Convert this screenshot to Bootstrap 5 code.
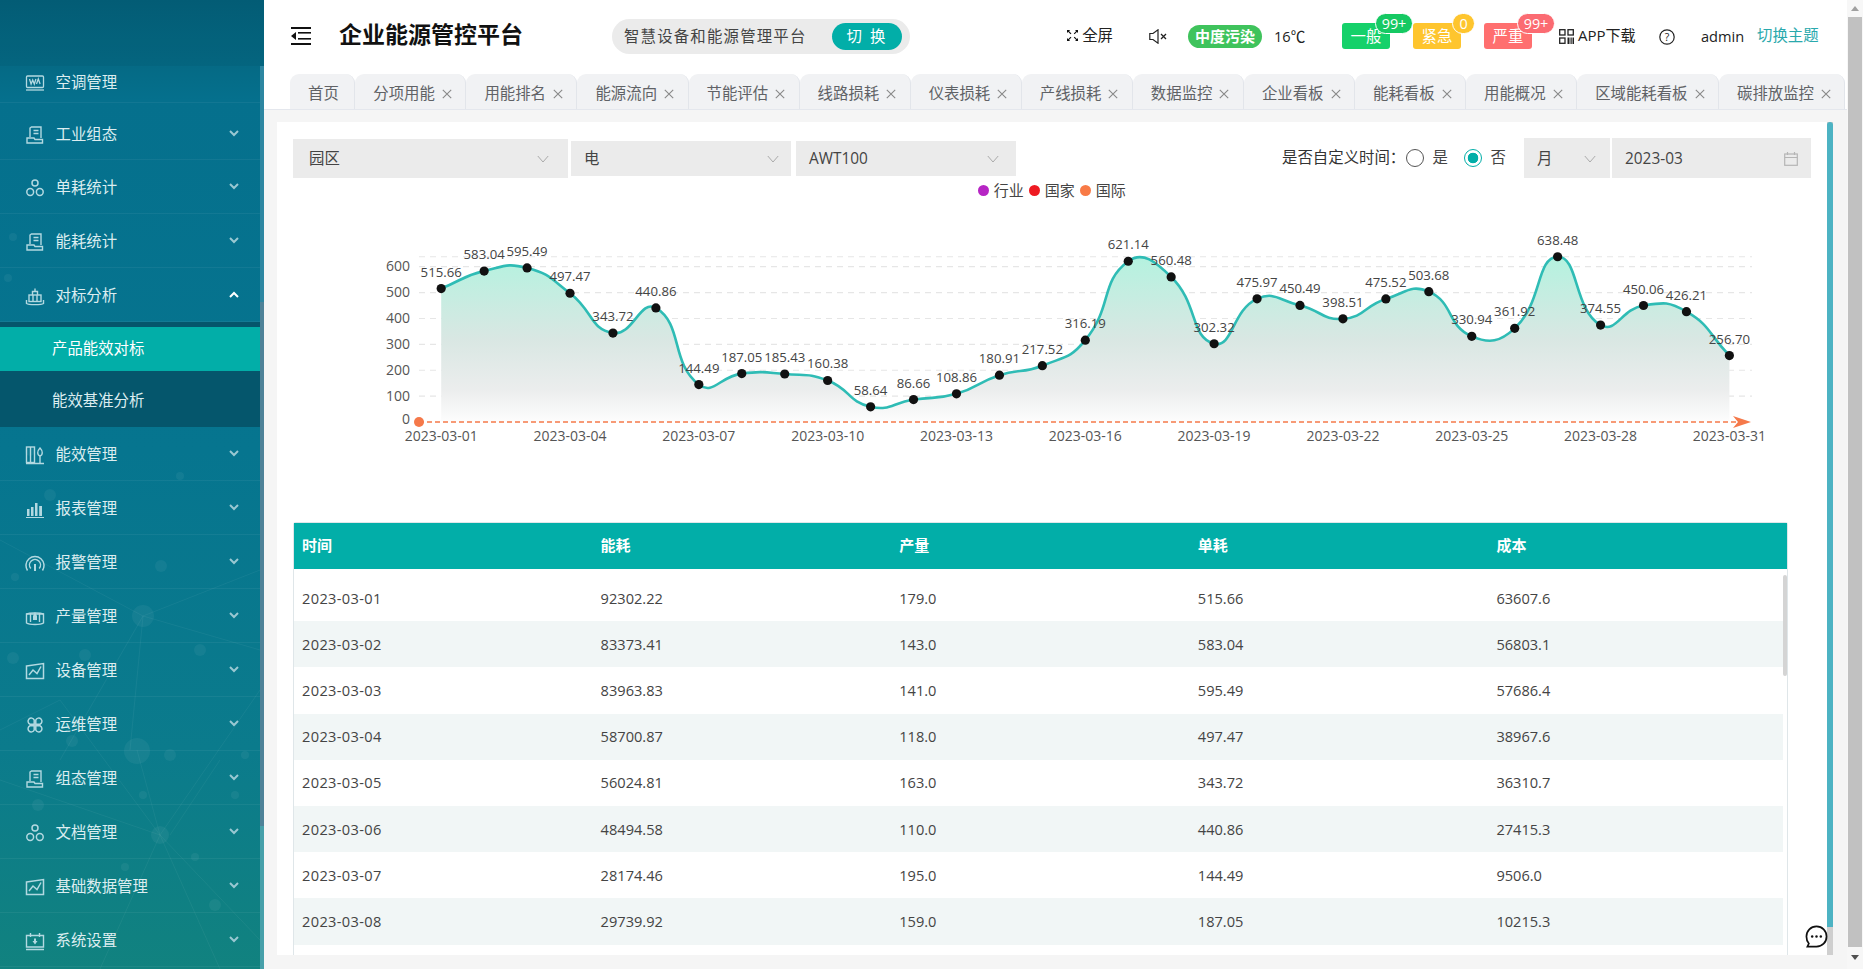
<!DOCTYPE html>
<html lang="zh-CN">
<head>
<meta charset="utf-8">
<title>企业能源管控平台</title>
<link href="https://cdn.jsdelivr.net/npm/bootstrap@5.3.0/dist/css/bootstrap.min.css" rel="stylesheet">
<style>
html,body{height:969px;overflow:hidden}
body{font-family:"Open Sans","Noto Sans CJK SC",sans-serif;font-size:15.4px;line-height:1.3;color:#444;background:#f5f5f5}
.app-shell{width:1863px;height:969px}
.side-wrap{width:264px;height:969px;flex:none;position:relative;overflow:hidden;background:linear-gradient(180deg,#04607a 0,#056a85 66px,#05708d 100px,#06758f 450px,#0b7b8c 750px,#11827f 969px)}
.side-logo{height:66px;background:rgba(0,0,0,.04)}
.side-decor{position:absolute;left:0;top:0;pointer-events:none}
.side-strip{position:absolute;left:260px;top:66px;width:4px;height:903px;background:linear-gradient(180deg,#2d86a1 0,#2d86a1 236px,#4f8298 236px,#4f8298 760px,#47a0aa 760px)}
.side-menu{width:260px;position:relative}
.side-row{height:54px;padding:3px 21px 0 25px;color:#dcedf0;border-bottom:1px solid rgba(255,255,255,.055)}
.side-row svg.ico{width:20px;height:20px;flex:none;margin-right:10.5px;color:#b3d9e1}
.side-row .chev{margin-left:auto;width:10px;height:7px;color:#9ac8d2;position:relative;top:-2px}
.side-row.open .chev{color:#fff}
.side-row.first{height:37px;padding-top:0;padding-bottom:2px}
.side-row.second{height:57px;padding-top:8px}
.sub-band{height:105px;padding:5px 0 0;background:#05566c}
.sub-item{height:44px;padding-left:52px;color:#dcedf0;display:flex;align-items:center}
.sub-item.on{background:#02aea8;color:#fff;height:44px}
.sub-item.off{height:56px;padding-top:5px}
.main-col{width:1583px;flex:none;height:969px;background:#f5f5f5}
.top-bar{height:72px;background:#fff;padding-left:27px;margin-bottom:0}
.tab-strip{height:38px;background:#fff;border-bottom:1px solid #e4e7ed;padding:2px 0 0 26px;overflow:hidden}
.tab-cell{height:35px;padding:5px 13.5px 0 18px;background:#f1f2f4;border-right:1px solid #e2e5ea;border-radius:9px 9px 0 0;color:#606266;white-space:nowrap;flex:none}
.tab-cell:first-child{padding-right:15.5px}
.tab-cell svg{width:10px;height:10px;margin-left:7px;color:#888}
.title-txt{font-size:23px;font-weight:700;color:#111;margin-left:28px;margin-top:-2px;width:183px;white-space:nowrap;letter-spacing:0}
.plat-pill{margin-left:90px;width:298px;height:35px;background:#ebebeb;border-radius:18px;padding:0 8px 0 12px;letter-spacing:1.2px;color:#444;white-space:nowrap;justify-content:space-between;flex:none}
.plat-name{margin-top:2px}
.plat-btn{width:70px;height:27px;border-radius:14px;background:#02aea8;color:#fff;border:0;font-size:15.4px;letter-spacing:2px;padding:0;line-height:27px}
.plat-btn:hover{background:#02aea8;color:#fff}
.t-item{flex:none;white-space:nowrap;color:#222}
.air-pill{margin-left:21px;width:74px;height:23px;border-radius:12px;background:#3fc35c;color:#fff;font-weight:700;font-size:15px;line-height:23px;text-align:center}
.alarm-tag{position:relative;width:48px;height:26px;border-radius:3px;color:#fff;text-align:center;line-height:27px;flex:none}
.alarm-bub{position:absolute;top:-10px;height:21px;border-radius:11px;color:#fff;font-size:14.4px;line-height:19px;border:1px solid #fff;left:33px;width:38px}
.tone-g{background:#15d16a}.tone-y{background:#fec52e}.tone-r{background:#ff6f6f}
.bub-g{background:#16c963}.bub-y{background:#fec52e;left:39px;width:23px}.bub-r{background:#fb6b72}
.link-theme{color:#2aa9ad;margin-left:13px;width:62px}
.card-area{margin:12px 0 0 13px;width:1556px;height:833px;background:#fff;position:relative;overflow:hidden}
.card-flow{width:1550px;padding:16px 16px 0;overflow:hidden;height:833px}
.inner-track{width:6px;height:833px;background:#cfcfcf;flex:none}
.inner-thumb{height:805px;background:#4db3c3;border-radius:3px 3px 0 0}
.pick-box{background:#ebebeb;color:#444;flex:none;padding:2px 14px 0 13px;white-space:nowrap}
.pick-box svg{width:12px;height:8px;color:#aaa}
.filter-row{height:40px}
.rd-input.form-check-input{width:18px;height:18px;margin:0;border:1px solid #555;background:#fff;flex:none;border-radius:50%}
.rd-input.form-check-input:checked{border-color:#02aea8;background:radial-gradient(circle,#02aea8 0,#02aea8 5px,#fff 5.6px)}
.rd-input.form-check-input:focus{box-shadow:none}
.legend-row{height:25px;padding-left:0;gap:0;font-size:15px;color:#444;width:1518px}
.leg-dot{width:11px;height:11px;border-radius:50%;display:inline-block;margin-right:4.5px}
.chart-svg{display:block;width:1550px;height:319px;margin-left:-16px}
.data-box{width:1495px;border-left:1px solid #dfe6e9;border-right:1px solid #dfe6e9;border-top:1px solid #dfe6e9;border-radius:3px 3px 0 0}
.data-head{height:46px;background:#02aea8;color:#fff;font-weight:700;font-size:15px}
.data-head>div{width:20%;padding-left:8px}
.data-body{position:relative;padding-top:6px;height:420px;overflow:hidden}
.data-body::after{content:"";position:absolute;right:0;top:0;bottom:0;width:4px;background:#fff}
.data-table{width:1493px;table-layout:fixed;margin:0;--bs-table-border-color:transparent;--bs-table-color:#444}
.data-table td{height:46.2px;padding:0 0 0 8px;vertical-align:middle;font-size:14.6px;border:0}
.data-table tr:nth-child(even) td{background:#f1f6f6}
.data-table td:first-child{letter-spacing:.35px}
.data-thumb{position:absolute;right:0;top:6px;width:4px;height:101px;background:#d4d4d4;border-radius:2px;z-index:1}
.chat-float{position:absolute;left:1528px;top:803px;width:23px;height:23px}
.page-bar{width:16px;height:969px;flex:none;background:#f7f7f7;padding:0 1px 0 1px;position:relative}
.page-thumb{height:930px;margin-top:17px;background:#c1c1c1}
.page-bar svg{position:absolute;left:4px;width:8px;height:5px}
.chart-lbl{font-family:"Open Sans",sans-serif;font-size:13.2px;fill:#444}
.chart-axis{font-family:"Open Sans",sans-serif;font-size:14px;fill:#555}
.flex-none{flex:none}
.t-full{margin-left:157px;width:46px}
.t-mute{margin-left:36px;flex:none}
.t-temp{margin-left:12px;width:31px;font-size:14.6px}
.t-a1{margin-left:37px}
.t-a2{margin-left:23px}
.t-app{margin-left:27px;width:76px;font-size:15px}
.t-qr{margin-right:4px;flex:none}
.t-help{margin-left:24px;flex:none;position:relative;top:1px}
.t-admin{margin-left:26px;width:43px;font-size:14.6px}
.pk-a{width:275px;height:39px;padding-left:16px;padding-right:19px}
.pk-b{width:220px;height:35px;margin-left:3px;padding-right:12px}
.pk-c{width:220px;height:35px;margin-left:5px;padding-right:17px}
.pk-m{width:86px;height:40px;margin-left:18px}
.pk-d{width:199px;height:40px;margin-left:2px;padding-right:13px}
.cal-ico{width:14px!important;height:14px!important}
.rd-lab{color:#333;margin-right:.4px;white-space:nowrap}
.rd-txt{margin:0 15.6px 0 9px;color:#444}
.rd-txt.last-rd{margin-right:0}
.lg-txt{margin-right:5.5px}
.lg-a{background:#b625c4}.lg-b{background:#ee1a22}.lg-c{background:#f87a46}
.bar-up{top:6px}.bar-dn{top:955px}
</style>
</head>
<body>
<svg width="0" height="0" class="position-absolute">
<defs>
<symbol id="i-ac" viewBox="0 0 20 20"><g fill="none" stroke="currentColor" stroke-width="1.3"><rect x="1.5" y="3" width="17" height="11.5" rx="1"/><path d="M4.5 6l1.6 5 1.6-4 1.6 4 1.6-5M11.5 11l1.8-5 1.8 5"/><path d="M1 17h18"/></g></symbol>
<symbol id="i-doc" viewBox="0 0 20 20"><g fill="none" stroke="currentColor" stroke-width="1.4"><path d="M5 12V3l1.5-1H16v11"/><path d="M8.5 5.5h5M8.5 8.5h5"/><path d="M2 13h7l1 1.5h7.5V18H2z"/></g></symbol>
<symbol id="i-tri" viewBox="0 0 20 20"><g fill="none" stroke="currentColor" stroke-width="1.5"><circle cx="10" cy="5" r="3"/><circle cx="5.2" cy="14" r="3.4"/><circle cx="14.8" cy="14" r="3.4"/></g></symbol>
<symbol id="i-stack" viewBox="0 0 20 20"><g fill="none" stroke="currentColor" stroke-width="1.4"><path d="M7.5 9V5.500h5V9"/><path d="M10 2.500v3"/><rect x="4" y="9" width="12" height="6.500"/><path d="M8 9v6.500M12 9v6.500"/><path d="M1.500 14v3.500c2 1.500 15 1.500 17 0V14"/></g></symbol>
<symbol id="i-bldg" viewBox="0 0 20 20"><g fill="none" stroke="currentColor" stroke-width="1.4"><rect x="1.500" y="2" width="8" height="15.500"/><path d="M5.500 2v15.500M1 18.500h18"/><path d="M15 3c-3 3-3 7 0 8 3-1 3-5 0-8zM15 11v7"/></g></symbol>
<symbol id="i-bars" viewBox="0 0 20 20"><g fill="currentColor"><rect x="2" y="10" width="2.500" height="7"/><rect x="6" y="8" width="2.500" height="9"/><rect x="10" y="4" width="2.500" height="13"/><rect x="14.200" y="7" width="2.800" height="10"/><rect x="1" y="18" width="18" height="1"/></g></symbol>
<symbol id="i-gauge" viewBox="0 0 20 20"><g fill="none" stroke="currentColor" stroke-width="1.500"><path d="M2.500 17.500A9 9 0 1 1 17.500 17.500"/><path d="M5.800 15.500A5.500 5.500 0 1 1 14.200 15.500"/><path d="M10 11v7" stroke-width="2"/></g></symbol>
<symbol id="i-box" viewBox="0 0 20 20"><g fill="none" stroke="currentColor" stroke-width="1.400"><path d="M1.500 7h17v9c-3 2-14 2-17 0z"/><path d="M1.500 7c3-1.500 14-1.500 17 0"/><path d="M5.500 6v9M14.500 6v9"/></g><path fill="currentColor" d="M8 9l2-4 2 4v4H8z"/></symbol>
<symbol id="i-line" viewBox="0 0 20 20"><g fill="none" stroke="currentColor" stroke-width="1.500"><path d="M1.500 5L18.500 2.500V17.500H1.500z"/><path d="M4 14l4-5 4 3.500 4-7"/></g></symbol>
<symbol id="i-clover" viewBox="0 0 20 20"><g fill="none" stroke="currentColor" stroke-width="1.500"><path d="M9.200 9.200H5A3.200 3.200 0 1 1 9.200 5z"/><path d="M10.800 9.200H15A3.200 3.200 0 1 0 10.800 5z"/><path d="M9.200 10.800H5A3.200 3.200 0 1 0 9.200 15z"/><path d="M10.800 10.800H15A3.200 3.200 0 1 1 10.800 15z"/></g></symbol>
<symbol id="i-power" viewBox="0 0 20 20"><g fill="none" stroke="currentColor" stroke-width="1.400"><path d="M1.500 4.500h17V16h-17z"/><path d="M5.500 2v4M14.500 2v4M1 18.500h18"/></g><path fill="currentColor" d="M9 7.500h2V10h1.500L10 13.500 7.500 10H9z"/></symbol>
<symbol id="i-chev" viewBox="0 0 10 7"><path d="M1 1l4 4 4-4" fill="none" stroke="currentColor" stroke-width="2"/></symbol>
<symbol id="i-chev-up" viewBox="0 0 10 7"><path d="M1 6l4-4 4 4" fill="none" stroke="currentColor" stroke-width="2"/></symbol>
<symbol id="i-x" viewBox="0 0 10 10"><path d="M.8.800l8.400 8.400M9.200.8L.8 9.200" fill="none" stroke="currentColor" stroke-width="1.100"/></symbol>
<symbol id="i-down" viewBox="0 0 12 8"><path d="M.8 1L6 7l5.200-6" fill="none" stroke="currentColor" stroke-width="1"/></symbol>
</defs>
</svg>

<div class="app-shell d-flex">
  <aside class="side-wrap">
    <svg class="side-decor" width="260" height="969" viewBox="0 0 260 969" fill="none">
      <g stroke="#fff" stroke-opacity=".05" stroke-width="1">
        <path d="M143 616L0 540M143 616L260 650M143 616L60 760M143 616L130 750M143 616L260 570M160 835L260 690M160 835L0 780M160 835L100 969M160 835L260 940M160 835L220 969M160 835L137 750M60 700L0 730M60 700L160 835M220 760L170 835"/>
      </g>
      <g fill="#fff" fill-opacity=".05">
        <circle cx="143" cy="616" r="11"/><circle cx="137" cy="751" r="13"/><circle cx="160" cy="835" r="9"/>
        <circle cx="13" cy="658" r="6"/><circle cx="50" cy="495" r="6"/><circle cx="180" cy="476" r="4"/><circle cx="161" cy="566" r="6"/><circle cx="15" cy="577" r="4"/>
        <circle cx="170" cy="755" r="6"/><circle cx="215" cy="905" r="6"/><circle cx="38" cy="805" r="6"/><circle cx="200" cy="650" r="6"/><circle cx="85" cy="655" r="6"/><circle cx="245" cy="755" r="4"/><circle cx="143" cy="795" r="4"/><circle cx="125" cy="867" r="4"/><circle cx="30" cy="451" r="5"/><circle cx="13" cy="237" r="4"/><circle cx="8" cy="278" r="4"/><circle cx="195" cy="857" r="4"/><circle cx="72" cy="741" r="6"/><circle cx="235" cy="795" r="4"/>
      </g>
    </svg>
    <div class="side-logo"></div>
    <nav class="side-menu">
      <div class="side-row first d-flex align-items-center"><svg class="ico"><use href="#i-ac"/></svg>空调管理</div>
      <div class="side-row second d-flex align-items-center"><svg class="ico"><use href="#i-doc"/></svg>工业组态<svg class="chev"><use href="#i-chev"/></svg></div>
      <div class="side-row d-flex align-items-center"><svg class="ico"><use href="#i-tri"/></svg>单耗统计<svg class="chev"><use href="#i-chev"/></svg></div>
      <div class="side-row d-flex align-items-center"><svg class="ico"><use href="#i-doc"/></svg>能耗统计<svg class="chev"><use href="#i-chev"/></svg></div>
      <div class="side-row open d-flex align-items-center"><svg class="ico"><use href="#i-stack"/></svg>对标分析<svg class="chev"><use href="#i-chev-up"/></svg></div>
      <div class="sub-band">
        <div class="sub-item on">产品能效对标</div>
        <div class="sub-item off">能效基准分析</div>
      </div>
      <div class="side-row d-flex align-items-center"><svg class="ico"><use href="#i-bldg"/></svg>能效管理<svg class="chev"><use href="#i-chev"/></svg></div>
      <div class="side-row d-flex align-items-center"><svg class="ico"><use href="#i-bars"/></svg>报表管理<svg class="chev"><use href="#i-chev"/></svg></div>
      <div class="side-row d-flex align-items-center"><svg class="ico"><use href="#i-gauge"/></svg>报警管理<svg class="chev"><use href="#i-chev"/></svg></div>
      <div class="side-row d-flex align-items-center"><svg class="ico"><use href="#i-box"/></svg>产量管理<svg class="chev"><use href="#i-chev"/></svg></div>
      <div class="side-row d-flex align-items-center"><svg class="ico"><use href="#i-line"/></svg>设备管理<svg class="chev"><use href="#i-chev"/></svg></div>
      <div class="side-row d-flex align-items-center"><svg class="ico"><use href="#i-clover"/></svg>运维管理<svg class="chev"><use href="#i-chev"/></svg></div>
      <div class="side-row d-flex align-items-center"><svg class="ico"><use href="#i-doc"/></svg>组态管理<svg class="chev"><use href="#i-chev"/></svg></div>
      <div class="side-row d-flex align-items-center"><svg class="ico"><use href="#i-tri"/></svg>文档管理<svg class="chev"><use href="#i-chev"/></svg></div>
      <div class="side-row d-flex align-items-center"><svg class="ico"><use href="#i-line"/></svg>基础数据管理<svg class="chev"><use href="#i-chev"/></svg></div>
      <div class="side-row d-flex align-items-center"><svg class="ico"><use href="#i-power"/></svg>系统设置<svg class="chev"><use href="#i-chev"/></svg></div>
    </nav>
    <div class="side-strip"></div>
  </aside>

  <main class="main-col">
    <header class="top-bar d-flex align-items-center">
      <svg width="20" height="18" viewBox="0 0 20 18" class="flex-none"><g fill="#111"><rect width="20" height="2"/><rect y="16" width="20" height="2"/><rect x="7" y="5" width="13" height="1.600"/><rect x="7" y="11" width="13" height="1.600"/><path d="M5 5v8L0 9z"/></g></svg>
      <div class="title-txt">企业能源管控平台</div>
      <div class="plat-pill d-flex align-items-center"><span class="plat-name">智慧设备和能源管理平台</span><button class="plat-btn btn" type="button">切 换</button></div>
      <div class="t-item d-flex align-items-center t-full"><svg width="15" height="15" viewBox="0 0 14 14" class="me-1"><g fill="none" stroke="#111" stroke-width="1.500"><path d="M5 5L1 1M9 5l4-4M5 9l-4 4M9 9l4 4"/></g><g fill="#111"><path d="M0 0h4L0 4zM14 0h-4l4 4zM0 14h4l-4-4zM14 14h-4l4-4z"/></g></svg>全屏</div>
      <svg class="t-mute" width="18" height="15" viewBox="0 0 18 15"><g fill="none" stroke="#222" stroke-width="1.200"><path d="M.8 4.500h3.200L9 .8v13.400L4 10.500H.8z"/><path d="M12 5l5 5M17 5l-5 5" stroke-width="1.300"/></g></svg>
      <div class="air-pill t-item">中度污染</div>
      <div class="t-item t-temp">16℃</div>
      <div class="alarm-tag tone-g t-a1">一般<span class="alarm-bub bub-g">99+</span></div>
      <div class="alarm-tag tone-y t-a2">紧急<span class="alarm-bub bub-y">0</span></div>
      <div class="alarm-tag tone-r t-a2">严重<span class="alarm-bub bub-r">99+</span></div>
      <div class="t-item d-flex align-items-center t-app"><svg width="15" height="15" viewBox="0 0 15 15" class="t-qr"><g fill="none" stroke="#222" stroke-width="1.300"><rect x=".7" y=".7" width="5.300" height="5.300"/><rect x="9" y=".7" width="5.300" height="5.300"/><rect x=".7" y="9" width="5.300" height="5.300"/></g><g fill="#222"><rect x="8.500" y="8.500" width="2" height="6.500"/><rect x="11.500" y="8.500" width="1.200" height="6.500"/><rect x="13.500" y="8.500" width="1.500" height="6.500"/></g></svg>APP下载</div>
      <svg class="t-help" width="16" height="16" viewBox="0 0 16 16"><circle cx="8" cy="8" r="7.200" fill="none" stroke="#222" stroke-width="1.200"/><text x="8" y="11.800" text-anchor="middle" font-size="10.500" fill="#222" font-family="Open Sans">?</text></svg>
      <div class="t-item t-admin">admin</div>
      <div class="t-item link-theme">切换主题</div>
    </header>
    <div class="tab-strip d-flex">
      <div class="tab-cell d-flex align-items-center">首页</div>
      <div class="tab-cell d-flex align-items-center">分项用能<svg><use href="#i-x"/></svg></div>
      <div class="tab-cell d-flex align-items-center">用能排名<svg><use href="#i-x"/></svg></div>
      <div class="tab-cell d-flex align-items-center">能源流向<svg><use href="#i-x"/></svg></div>
      <div class="tab-cell d-flex align-items-center">节能评估<svg><use href="#i-x"/></svg></div>
      <div class="tab-cell d-flex align-items-center">线路损耗<svg><use href="#i-x"/></svg></div>
      <div class="tab-cell d-flex align-items-center">仪表损耗<svg><use href="#i-x"/></svg></div>
      <div class="tab-cell d-flex align-items-center">产线损耗<svg><use href="#i-x"/></svg></div>
      <div class="tab-cell d-flex align-items-center">数据监控<svg><use href="#i-x"/></svg></div>
      <div class="tab-cell d-flex align-items-center">企业看板<svg><use href="#i-x"/></svg></div>
      <div class="tab-cell d-flex align-items-center">能耗看板<svg><use href="#i-x"/></svg></div>
      <div class="tab-cell d-flex align-items-center">用能概况<svg><use href="#i-x"/></svg></div>
      <div class="tab-cell d-flex align-items-center">区域能耗看板<svg><use href="#i-x"/></svg></div>
      <div class="tab-cell d-flex align-items-center">碳排放监控<svg><use href="#i-x"/></svg></div>
    </div>
    <section class="card-area d-flex">
      <div class="card-flow">
        <div class="filter-row d-flex align-items-center">
          <div class="pick-box pk-a d-flex align-items-center justify-content-between">园区<svg><use href="#i-down"/></svg></div>
          <div class="pick-box pk-b d-flex align-items-center justify-content-between">电<svg><use href="#i-down"/></svg></div>
          <div class="pick-box pk-c d-flex align-items-center justify-content-between">AWT100<svg><use href="#i-down"/></svg></div>
          <div class="ms-auto d-flex align-items-center">
            <span class="rd-lab">是否自定义时间：</span>
            <input class="form-check-input rd-input" type="radio" name="own">
            <span class="rd-txt">是</span>
            <input class="form-check-input rd-input" type="radio" name="own" checked>
            <span class="rd-txt last-rd">否</span>
            <div class="pick-box pk-m d-flex align-items-center justify-content-between">月<svg><use href="#i-down"/></svg></div>
            <div class="pick-box pk-d d-flex align-items-center justify-content-between">2023-03<svg class="cal-ico" viewBox="0 0 14 14"><g fill="none" stroke="#b5b5b5" stroke-width="1.200"><rect x=".7" y="2" width="12.600" height="11.300"/><path d="M.7 5.500h12.600M3.500 0v3M10.500 0v3"/></g></svg></div>
          </div>
        </div>
        <div class="legend-row d-flex align-items-center justify-content-center">
          <i class="leg-dot lg-a"></i><span class="lg-txt">行业</span>
          <i class="leg-dot lg-b"></i><span class="lg-txt">国家</span>
          <i class="leg-dot lg-c"></i><span>国际</span>
        </div>
        <svg id="energyChart" class="chart-svg" viewBox="277 203 1550 319" xmlns="http://www.w3.org/2000/svg">
          <defs><linearGradient id="areaFill" x1="0" y1="0" x2="0" y2="1"><stop offset="0" stop-color="#b4f2df"/><stop offset=".5" stop-color="#d9e7e3"/><stop offset=".8" stop-color="#ebeded"/><stop offset="1" stop-color="#fdfdfd"/></linearGradient></defs>
        </svg>
        <div class="data-box">
          <div class="data-head d-flex align-items-center"><div>时间</div><div>能耗</div><div>产量</div><div>单耗</div><div>成本</div></div>
          <div class="data-body">
            <table class="table data-table"><tbody>
              <tr><td>2023-03-01</td><td>92302.22</td><td>179.0</td><td>515.66</td><td>63607.6</td></tr>
              <tr><td>2023-03-02</td><td>83373.41</td><td>143.0</td><td>583.04</td><td>56803.1</td></tr>
              <tr><td>2023-03-03</td><td>83963.83</td><td>141.0</td><td>595.49</td><td>57686.4</td></tr>
              <tr><td>2023-03-04</td><td>58700.87</td><td>118.0</td><td>497.47</td><td>38967.6</td></tr>
              <tr><td>2023-03-05</td><td>56024.81</td><td>163.0</td><td>343.72</td><td>36310.7</td></tr>
              <tr><td>2023-03-06</td><td>48494.58</td><td>110.0</td><td>440.86</td><td>27415.3</td></tr>
              <tr><td>2023-03-07</td><td>28174.46</td><td>195.0</td><td>144.49</td><td>9506.0</td></tr>
              <tr><td>2023-03-08</td><td>29739.92</td><td>159.0</td><td>187.05</td><td>10215.3</td></tr>
            </tbody></table>
            <div class="data-thumb"></div>
          </div>
        </div>
      </div>
      <div class="inner-track"><div class="inner-thumb"></div></div>
      <svg class="chat-float" viewBox="0 0 24 24"><path d="M12 1.500c6 0 10.500 4.500 10.500 10.500S18 22.500 12 22.500H2.500l1.500-3.200C2.300 17.500 1.500 15 1.500 12 1.500 6 6 1.500 12 1.500z" fill="#fff" stroke="#111" stroke-width="1.800"/><circle cx="7.500" cy="12" r="1.300" fill="#111"/><circle cx="12" cy="12" r="1.300" fill="#111"/><circle cx="16.500" cy="12" r="1.300" fill="#111"/></svg>
    </section>
  </main>
  <div class="page-bar">
    <svg class="bar-up" viewBox="0 0 8 5"><path d="M4 0l4 5H0z" fill="#a0a0a0"/></svg>
    <div class="page-thumb"></div>
    <svg class="bar-dn" viewBox="0 0 8 5"><path d="M4 5L0 0h8z" fill="#505050"/></svg>
  </div>
</div>
<script src="https://cdn.jsdelivr.net/npm/bootstrap@5.3.0/dist/js/bootstrap.bundle.min.js"></script>
<script>
(function(){
  var data=[515.66,583.04,595.49,497.47,343.72,440.86,144.49,187.05,185.43,160.38,58.64,86.66,108.86,180.91,217.52,316.19,621.14,560.48,302.32,475.97,450.49,398.51,475.52,503.68,330.94,361.92,638.48,374.55,450.06,426.21,256.70];
  var svg=document.getElementById('energyChart'),NS='http://www.w3.org/2000/svg';
  var x0=441.2,step=42.94,y0=422,k=0.2588;
  function mk(t,a,txt){var e=document.createElementNS(NS,t);for(var n in a)e.setAttribute(n,a[n]);if(txt!=null)e.textContent=txt;svg.appendChild(e);return e;}
  var pts=data.map(function(v,i){return [x0+i*step,y0-v*k];});
  [100,200,300,400,500,600,638.48].forEach(function(v){var y=y0-v*k;mk('line',{x1:419,x2:1752,y1:y,y2:y,stroke:'#e6e6e6','stroke-width':1.2,'stroke-dasharray':'6 5'});});
  [0,100,200,300,400,500,600].forEach(function(v){mk('text',{x:410,y:y0-v*k+(v===0?2:5)-(v===600||v===500?1:0),'text-anchor':'end','class':'chart-axis'},v);});
  var d='M'+pts[0][0]+' '+pts[0][1];
  function dist(a,b){return Math.hypot(a[0]-b[0],a[1]-b[1]);}
  function cps(i){
    var c=pts[i],p=pts[Math.max(i-1,0)],n=pts[Math.min(i+1,pts.length-1)];
    var vx=(n[0]-p[0])*.5,vy=(n[1]-p[1])*.5,d0=dist(c,p),d1=dist(c,n),s=d0+d1;
    return {a:[c[0]-vx*d0/s,c[1]-vy*d0/s],b:[c[0]+vx*d1/s,c[1]+vy*d1/s]};
  }
  for(var i=0;i<pts.length-1;i++){
    var c1=cps(i).b,c2=cps(i+1).a;
    d+='C'+c1[0].toFixed(2)+' '+c1[1].toFixed(2)+' '+c2[0].toFixed(2)+' '+c2[1].toFixed(2)+' '+pts[i+1][0].toFixed(2)+' '+pts[i+1][1].toFixed(2);
  }
  mk('path',{d:d+'L'+pts[30][0]+' '+y0+'L'+pts[0][0]+' '+y0+'Z',fill:'url(#areaFill)'});
  mk('line',{x1:419,x2:1738,y1:y0,y2:y0,stroke:'#f5794a','stroke-width':1.5,'stroke-dasharray':'5 3'});
  mk('circle',{cx:419,cy:y0,r:5,fill:'#f5794a'});
  mk('path',{d:'M1751 422L1733 416L1738 422L1733 428Z',fill:'#f5794a'});
  mk('path',{d:d,fill:'none',stroke:'#2fbcb5','stroke-width':2.6});
  pts.forEach(function(p){mk('circle',{cx:p[0],cy:p[1],r:4.6,fill:'#111'});});
  pts.forEach(function(p,i){mk('text',{x:p[0],y:p[1]-12,'text-anchor':'middle','class':'chart-lbl'},data[i].toFixed(2));});
  for(var j=0;j<31;j+=3){var dd=j+1;mk('text',{x:x0+j*step,y:441,'text-anchor':'middle','class':'chart-axis'},'2023-03-'+(dd<10?'0':'')+dd);}
})();
</script>
</body>
</html>
